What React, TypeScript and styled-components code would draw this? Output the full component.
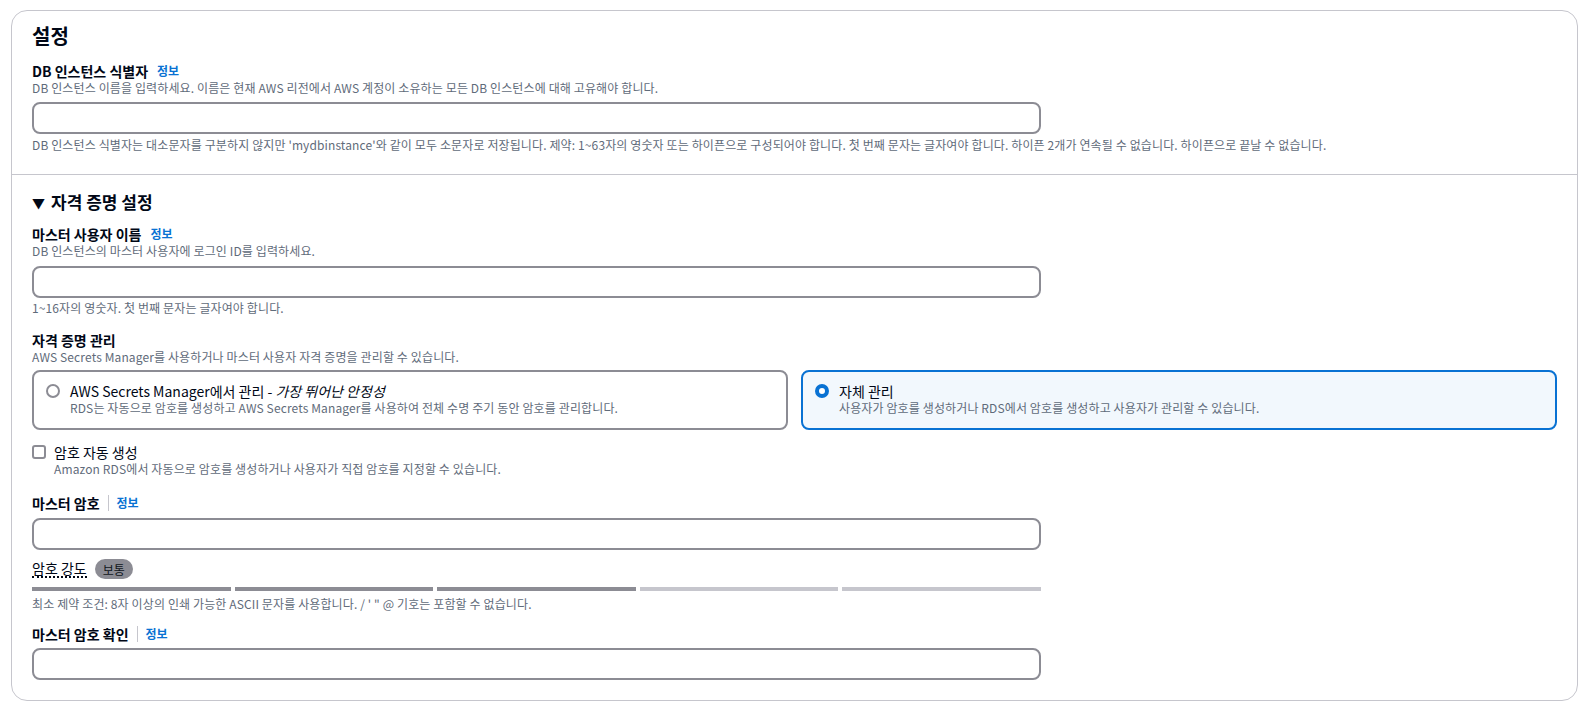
import React, { useState } from "react";
import styled, { createGlobalStyle, css } from "styled-components";

const GlobalStyle = createGlobalStyle`
  html, body {
    margin: 0;
    padding: 0;
    background: #ffffff;
  }
  body {
    font-family: "Noto Sans CJK KR", "Noto Sans", sans-serif;
    color: #000716;
  }
  * {
    box-sizing: border-box;
  }
`;

const Page = styled.div`
  padding: 10px 11px 10px 11px;
`;

const Card = styled.div`
  border: 1px solid #c6c6cd;
  border-radius: 16px;
  background: #ffffff;
`;

const Section = styled.div<{ $top: number; $bottom: number; $divider?: boolean }>`
  padding: ${(p) => p.$top}px 20px ${(p) => p.$bottom}px 20px;
  ${(p) =>
    p.$divider &&
    css`
      border-top: 1px solid #c6c6cd;
    `}
`;

const Title = styled.h2`
  margin: 0;
  font-size: 20px;
  line-height: 24px;
  font-weight: 700;
`;

const ExpandTitle = styled.h3`
  margin: 0;
  font-size: 17px;
  line-height: 24px;
  font-weight: 700;
  display: flex;
  align-items: center;
  gap: 6px;
`;

const Caret = styled.span`
  font-size: 13px;
  line-height: 1;
`;

const Field = styled.div<{ $mt: number }>`
  margin-top: ${(p) => p.$mt}px;
`;

const LabelRow = styled.div`
  display: flex;
  align-items: center;
  height: 18px;
`;

const Label = styled.span`
  font-size: 14px;
  line-height: 18px;
  font-weight: 700;
`;

const InfoLink = styled.a<{ $sep?: boolean }>`
  font-size: 12px;
  line-height: 16px;
  font-weight: 700;
  color: #0972d3;
  text-decoration: none;
  margin-left: 9px;
  ${(p) =>
    p.$sep &&
    css`
      margin-left: 8px;
      padding-left: 8px;
      border-left: 1px solid #c6c6cd;
    `}
`;

const Desc = styled.div`
  font-size: 12px;
  line-height: 16px;
  letter-spacing: 0.12px;
  color: #5f6b7a;
`;

const Hint = styled(Desc)<{ $mt?: number }>`
  margin-top: ${(p) => p.$mt ?? 2}px;
`;

const Input = styled.input<{ $mt?: number }>`
  display: block;
  width: 1009px;
  height: 32px;
  margin: ${(p) => p.$mt ?? 6}px 0 0 0;
  border: 2px solid #8c8c94;
  border-radius: 8px;
  background: #ffffff;
  padding: 4px 12px;
  font-family: inherit;
  font-size: 14px;
  outline: none;
`;

const TileGrid = styled.div`
  display: grid;
  grid-template-columns: minmax(0, 1fr) minmax(0, 1fr);
  gap: 13px;
  margin-top: 5px;
`;

const Tile = styled.label<{ $selected?: boolean }>`
  display: flex;
  gap: 10px;
  height: 60px;
  padding: 10px 12px;
  border: 2px solid ${(p) => (p.$selected ? "#0972d3" : "#8c8c94")};
  border-radius: 8px;
  background: ${(p) => (p.$selected ? "#f2f8fd" : "#ffffff")};
  cursor: pointer;
`;

const Radio = styled.span<{ $checked?: boolean }>`
  flex: none;
  width: 14px;
  height: 14px;
  margin-top: 2px;
  border-radius: 50%;
  background: #ffffff;
  border: ${(p) => (p.$checked ? "4px solid #0972d3" : "2px solid #8c8c94")};
`;

const OptionText = styled.div`
  display: flex;
  flex-direction: column;
`;

const OptionLabel = styled.span`
  font-size: 14px;
  line-height: 18px;
  em {
    font-style: italic;
  }
`;

const CheckRow = styled.label`
  display: flex;
  gap: 8px;
  margin-top: 13px;
  cursor: pointer;
`;

const Checkbox = styled.span<{ $checked?: boolean }>`
  flex: none;
  width: 14px;
  height: 14px;
  margin-top: 2px;
  border: 2px solid #8c8c94;
  border-radius: 3px;
  background: ${(p) => (p.$checked ? "#0972d3" : "#ffffff")};
`;

const StrengthRow = styled.div`
  display: flex;
  align-items: center;
  gap: 8px;
  margin-top: 9px;
  height: 20px;
`;

const StrengthLabel = styled.span`
  font-size: 14px;
  line-height: 16px;
  border-bottom: 2px dotted #000716;
`;

const Badge = styled.span`
  display: inline-flex;
  align-items: center;
  height: 20px;
  padding: 0 8px;
  border-radius: 10px;
  background: #8c8c94;
  color: #0f141a;
  font-size: 12px;
`;

const Bars = styled.div`
  display: grid;
  grid-template-columns: repeat(5, 1fr);
  gap: 4px;
  width: 1009px;
  margin-top: 8px;
`;

const Bar = styled.div<{ $on: boolean }>`
  height: 4px;
  background: ${(p) => (p.$on ? "#8c8c94" : "#c6c6cd")};
`;

const options = [
  {
    id: "secrets",
    label: (
      <>
        AWS Secrets Manager에서 관리 - <em>가장 뛰어난 안정성</em>
      </>
    ),
    desc: "RDS는 자동으로 암호를 생성하고 AWS Secrets Manager를 사용하여 전체 수명 주기 동안 암호를 관리합니다.",
  },
  {
    id: "self",
    label: <>자체 관리</>,
    desc: "사용자가 암호를 생성하거나 RDS에서 암호를 생성하고 사용자가 관리할 수 있습니다.",
  },
];

export default function App() {
  const [cred, setCred] = useState("self");
  const [autoGen, setAutoGen] = useState(false);
  const strength = 3;

  return (
    <Page>
      <GlobalStyle />
      <Card>
        <Section $top={13} $bottom={21}>
          <Title>설정</Title>
          <Field $mt={14}>
            <LabelRow>
              <Label>DB 인스턴스 식별자</Label>
              <InfoLink>정보</InfoLink>
            </LabelRow>
            <Desc>DB 인스턴스 이름을 입력하세요. 이름은 현재 AWS 리전에서 AWS 계정이 소유하는 모든 DB 인스턴스에 대해 고유해야 합니다.</Desc>
            <Input />
            <Hint $mt={3}>
              DB 인스턴스 식별자는 대소문자를 구분하지 않지만 'mydbinstance'와 같이 모두 소문자로 저장됩니다. 제약: 1~63자의 영숫자 또는 하이픈으로 구성되어야 합니다. 첫 번째 문자는 글자여야 합니다. 하이픈 2개가 연속될 수 없습니다. 하이픈으로 끝날 수 없습니다.
            </Hint>
          </Field>
        </Section>
        <Section $top={15} $bottom={20} $divider>
          <ExpandTitle>
            <Caret>▼</Caret>
            자격 증명 설정
          </ExpandTitle>
          <Field $mt={11}>
            <LabelRow>
              <Label>마스터 사용자 이름</Label>
              <InfoLink>정보</InfoLink>
            </LabelRow>
            <Desc>DB 인스턴스의 마스터 사용자에 로그인 ID를 입력하세요.</Desc>
            <Input $mt={7} />
            <Hint>1~16자의 영숫자. 첫 번째 문자는 글자여야 합니다.</Hint>
          </Field>
          <Field $mt={15}>
            <LabelRow>
              <Label>자격 증명 관리</Label>
            </LabelRow>
            <Desc>AWS Secrets Manager를 사용하거나 마스터 사용자 자격 증명을 관리할 수 있습니다.</Desc>
            <TileGrid>
              {options.map((o) => (
                <Tile key={o.id} $selected={cred === o.id} onClick={() => setCred(o.id)}>
                  <Radio $checked={cred === o.id} />
                  <OptionText>
                    <OptionLabel>{o.label}</OptionLabel>
                    <Desc>{o.desc}</Desc>
                  </OptionText>
                </Tile>
              ))}
            </TileGrid>
          </Field>
          <CheckRow onClick={() => setAutoGen(!autoGen)}>
            <Checkbox $checked={autoGen} />
            <OptionText>
              <OptionLabel>암호 자동 생성</OptionLabel>
              <Desc>Amazon RDS에서 자동으로 암호를 생성하거나 사용자가 직접 암호를 지정할 수 있습니다.</Desc>
            </OptionText>
          </CheckRow>
          <Field $mt={17}>
            <LabelRow>
              <Label>마스터 암호</Label>
              <InfoLink $sep>정보</InfoLink>
            </LabelRow>
            <Input $mt={6} type="password" />
            <StrengthRow>
              <StrengthLabel>암호 강도</StrengthLabel>
              <Badge>보통</Badge>
            </StrengthRow>
            <Bars>
              {[0, 1, 2, 3, 4].map((i) => (
                <Bar key={i} $on={i < strength} />
              ))}
            </Bars>
            <Hint $mt={5}>최소 제약 조건: 8자 이상의 인쇄 가능한 ASCII 문자를 사용합니다. / ' " @ 기호는 포함할 수 없습니다.</Hint>
          </Field>
          <Field $mt={13}>
            <LabelRow>
              <Label>마스터 암호 확인</Label>
              <InfoLink $sep>정보</InfoLink>
            </LabelRow>
            <Input $mt={5} type="password" />
          </Field>
        </Section>
      </Card>
    </Page>
  );
}
